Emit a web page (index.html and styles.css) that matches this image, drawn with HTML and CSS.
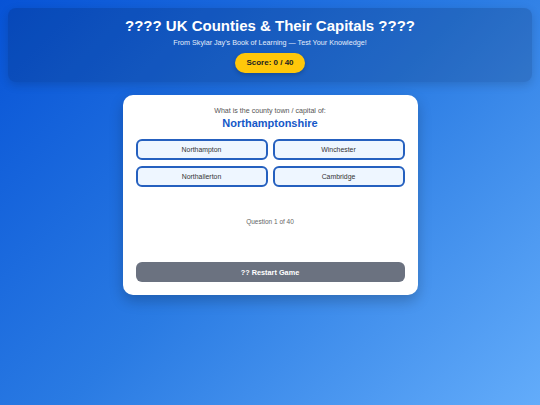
FILE: index.html
```html
<!DOCTYPE html>
<html lang="en">
<head>
<meta charset="utf-8">
<title>UK Counties &amp; Their Capitals</title>
<link rel="stylesheet" href="styles.css">
</head>
<body>
<header class="hero">
  <h1 class="title">???? UK Counties &amp; Their Capitals ????</h1>
  <p class="subtitle">From Skylar Jay's Book of Learning — Test Your Knowledge!</p>
  <div class="score">Score: 0 / 40</div>
</header>
<main class="card">
  <p class="prompt">What is the county town / capital of:</p>
  <h2 class="county">Northamptonshire</h2>
  <div class="options">
    <button class="option">Northampton</button>
    <button class="option">Winchester</button>
    <button class="option">Northallerton</button>
    <button class="option">Cambridge</button>
  </div>
  <p class="progress">Question 1 of 40</p>
  <button class="restart">?? Restart Game</button>
</main>
</body>
</html>
```
FILE: styles.css
```css
* { box-sizing: border-box; }
html, body { height: 100%; }
body {
  margin: 0;
  padding: 8px;
  font-family: "Liberation Sans", Arial, sans-serif;
  background: linear-gradient(135deg, #0753d6 0%, #2a7be3 50%, #63acfa 100%);
  min-height: 405px;
}
.hero {
  background: rgba(0, 10, 40, 0.17);
  border-radius: 8px;
  padding: 9px 10px 9px;
  text-align: center;
  color: #fff;
  box-shadow: 0 3px 10px rgba(0, 0, 0, 0.15);
}
.title {
  margin: 0;
  font-size: 15px;
  line-height: 18px;
  font-weight: bold;
}
.subtitle {
  margin: 3px 0 3px;
  font-size: 7.2px;
  line-height: 10px;
  color: #e3ecfb;
}
.score {
  display: inline-block;
  background: #ffc70a;
  color: #222;
  font-weight: bold;
  font-size: 8px;
  line-height: 20px;
  padding: 0 11px;
  border-radius: 10px;
  box-shadow: 0 2px 4px rgba(0, 0, 0, 0.2);
}
.card {
  width: 295px;
  margin: 13px auto 0;
  background: #fff;
  border-radius: 10px;
  padding: 12px 13px 13px;
  text-align: center;
  box-shadow: 0 6px 14px rgba(0, 0, 0, 0.22);
}
.prompt {
  margin: 0;
  font-size: 7.1px;
  line-height: 9px;
  color: #555;
}
.county {
  margin: 0 0 9px;
  font-size: 11px;
  line-height: 14px;
  color: #1558c8;
  font-weight: bold;
}
.options {
  display: grid;
  grid-template-columns: 1fr 1fr;
  gap: 6px 5px;
}
.option {
  font-family: inherit;
  font-size: 6.9px;
  color: #333;
  background: #eef6ff;
  border: 2px solid #2560bf;
  border-radius: 6px;
  height: 21px;
  padding: 0;
}
.progress {
  margin: 31px 0 36px;
  font-size: 6.5px;
  line-height: 8px;
  color: #666;
}
.restart {
  display: block;
  width: 100%;
  height: 20px;
  font-family: inherit;
  font-size: 7.3px;
  font-weight: bold;
  color: #fff;
  background: #6b7280;
  border: 0;
  border-radius: 6px;
}
```
